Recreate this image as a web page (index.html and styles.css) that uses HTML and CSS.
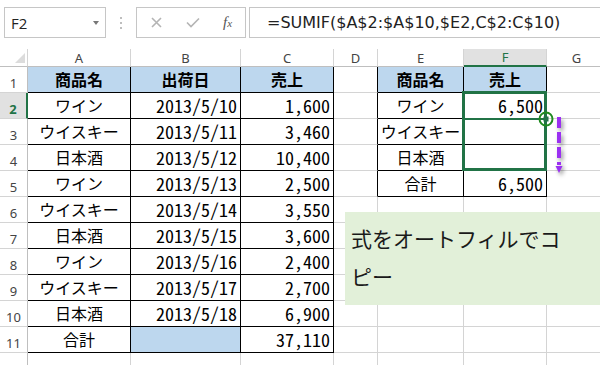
FILE: index.html
```html
<!DOCTYPE html>
<html lang="ja">
<head>
    <meta charset="UTF-8">
    <meta name="viewport" content="width=device-width, initial-scale=1.0">
    <title>SUMIF オートフィル</title>
    <link rel="stylesheet" href="styles.css">
</head>
<body>
    <div class="formula-bar">
        <div class="name-box"><span>F2</span><span class="drop"></span></div>
        <div class="grip">
            <svg width="4" height="14" viewBox="0 0 4 14"><circle cx="2" cy="2" r="1" /><circle cx="2" cy="7" r="1" /><circle cx="2" cy="12" r="1" /></svg>
        </div>
        <div class="func-box">
            <svg class="cancel" width="11" height="11" viewBox="0 0 11 11"><path d="M1 1L10 10M10 1L1 10" /></svg>
            <svg class="enter" width="14" height="11" viewBox="0 0 14 11"><path d="M1 5.5L5 9.5L13 1.5" /></svg>
            <span class="fx">f<i>x</i></span>
        </div>
        <div class="formula">=SUMIF($A$2:$A$10,$E2,C$2:C$10)</div>
    </div>

    <div class="sheet">
        <table class="grid">
            <colgroup>
                <col class="w-rh"><col class="w-a"><col class="w-b"><col class="w-c"><col class="w-d"><col class="w-e"><col class="w-f"><col class="w-g">
            </colgroup>
            <thead>
                <tr class="col-heads">
                    <th class="corner"><div class="corner-box"><span class="tri"></span></div></th>
                    <th>A</th><th>B</th><th>C</th><th>D</th><th>E</th><th class="on">F</th><th>G</th>
                </tr>
            </thead>
            <tbody>
                <tr>
                    <th class="rh">1</th>
                    <td class="t h c">商品名</td><td class="t h c">出荷日</td><td class="t h c">売上</td>
                    <td class="edge"></td>
                    <td class="t h c">商品名</td><td class="t h c">売上</td><td></td>
                </tr>
                <tr>
                    <th class="rh on">2</th>
                    <td class="t c">ワイン</td><td class="t n">2013/5/10</td><td class="t n">1,600</td>
                    <td class="edge"></td>
                    <td class="t c">ワイン</td><td class="t n">6,500</td><td></td>
                </tr>
                <tr>
                    <th class="rh">3</th>
                    <td class="t c">ウイスキー</td><td class="t n">2013/5/11</td><td class="t n">3,460</td>
                    <td class="edge"></td>
                    <td class="t c">ウイスキー</td><td class="t n"></td><td></td>
                </tr>
                <tr>
                    <th class="rh">4</th>
                    <td class="t c">日本酒</td><td class="t n">2013/5/12</td><td class="t n">10,400</td>
                    <td class="edge"></td>
                    <td class="t c">日本酒</td><td class="t n"></td><td></td>
                </tr>
                <tr>
                    <th class="rh">5</th>
                    <td class="t c">ワイン</td><td class="t n">2013/5/13</td><td class="t n">2,500</td>
                    <td class="edge"></td>
                    <td class="t c">合計</td><td class="t n">6,500</td><td></td>
                </tr>
                <tr>
                    <th class="rh">6</th>
                    <td class="t c">ウイスキー</td><td class="t n">2013/5/14</td><td class="t n">3,550</td>
                    <td></td><td></td><td></td><td></td>
                </tr>
                <tr>
                    <th class="rh">7</th>
                    <td class="t c">日本酒</td><td class="t n">2013/5/15</td><td class="t n">3,600</td>
                    <td></td><td></td><td></td><td></td>
                </tr>
                <tr>
                    <th class="rh">8</th>
                    <td class="t c">ワイン</td><td class="t n">2013/5/16</td><td class="t n">2,400</td>
                    <td></td><td></td><td></td><td></td>
                </tr>
                <tr>
                    <th class="rh">9</th>
                    <td class="t c">ウイスキー</td><td class="t n">2013/5/17</td><td class="t n">2,700</td>
                    <td></td><td></td><td></td><td></td>
                </tr>
                <tr>
                    <th class="rh">10</th>
                    <td class="t c">日本酒</td><td class="t n">2013/5/18</td><td class="t n">6,900</td>
                    <td></td><td></td><td></td><td></td>
                </tr>
                <tr>
                    <th class="rh">11</th>
                    <td class="t c">合計</td><td class="t fill"></td><td class="t n">37,110</td>
                    <td></td><td></td><td></td><td></td>
                </tr>
                <tr>
                    <th class="rh"></th>
                    <td></td><td></td><td></td><td></td><td></td><td></td><td></td>
                </tr>
            </tbody>
        </table>

        <!-- selection F2:F4 and the autofill drag -->
        <div class="sel"><div class="sel-top"></div></div>
        <svg class="handle" width="18" height="18" viewBox="0 0 18 18">
            <rect x="6.5" y="6.5" width="5" height="5" fill="#217346" />
            <circle cx="9" cy="9" r="6.5" fill="none" stroke="#1f8a1f" stroke-width="2" />
        </svg>
        <svg class="drag" width="14" height="66" viewBox="0 0 14 66">
            <path d="M5 2V50" stroke="#9b30f2" stroke-width="4" stroke-dasharray="11 4" fill="none" />
            <path d="M1.5 51H8.5L5 58Z" fill="#9b30f2" />
        </svg>

        <div class="note">式をオートフィルでコピー</div>
    </div>
</body>
</html>
```

FILE: styles.css
```css
html, body {
    margin: 0;
    overflow: hidden;
}
body {
    width: 600px;
    height: 365px;
    background: #fff;
    font-family: "Noto Sans CJK JP", sans-serif;
    color: #000;
}

/* formula bar */
.formula-bar {
    display: flex;
    align-items: flex-start;
    height: 49px;
    padding: 7px 0 0 4px;
    box-sizing: border-box;
}
.name-box {
    display: flex;
    align-items: center;
    width: 102px;
    height: 31px;
    padding: 0 6px 0 6px;
    box-sizing: border-box;
    border: 1px solid #c6c6c6;
    font: 15px "Open Sans", sans-serif;
    color: #222;
}
.drop {
    margin-left: auto;
    border-left: 3px solid transparent;
    border-right: 3px solid transparent;
    border-top: 4px solid #777;
}
.grip {
    display: flex;
    justify-content: center;
    align-items: center;
    width: 30px;
    height: 31px;
}
.grip svg {
    fill: #a8a8a8;
}
.func-box {
    display: flex;
    align-items: center;
    width: 110px;
    height: 31px;
    padding-left: 14px;
    box-sizing: border-box;
    border: 1px solid #c6c6c6;
}
.func-box path {
    fill: none;
    stroke: #b4b4b4;
    stroke-width: 1.6;
}
.enter {
    margin-left: 24px;
}
.fx {
    margin-left: 23px;
    font: italic 15px "Liberation Serif", serif;
    color: #555;
}
.fx i {
    font-size: 11px;
}
.formula {
    flex: 1;
    height: 31px;
    margin-left: 3px;
    padding-left: 17px;
    box-sizing: border-box;
    border: 1px solid #c6c6c6;
    border-right: none;
    font: 16px/29px "DejaVu Sans", sans-serif;
    color: #222;
    white-space: nowrap;
}

/* sheet */
.sheet {
    position: relative;
}
.grid {
    border-collapse: separate;
    border-spacing: 0;
    table-layout: fixed;
    width: 607px;
}
.w-rh { width: 28px; }
.w-a { width: 103px; }
.w-b { width: 110px; }
.w-c { width: 93px; }
.w-d { width: 44px; }
.w-e { width: 86px; }
.w-f { width: 83px; }
.w-g { width: 60px; }

.grid th, .grid td {
    box-sizing: border-box;
    padding: 0;
    border-right: 1px solid #d4d4d4;
    border-bottom: 1px solid #d4d4d4;
    white-space: nowrap;
    overflow: hidden;
}
.grid td {
    height: 26px;
    font-size: 16px;
    line-height: 1;
    vertical-align: middle;
    padding-bottom: 2px;
}
.col-heads th {
    height: 18px;
    font: 13px "Noto Sans", sans-serif;
    color: #444;
    font-weight: normal;
    border-bottom-color: #bfbfbf;
    line-height: 16px;
}
.col-heads th.on {
    background: #e1e1e1;
    color: #217346;
    border-bottom: 2px solid #217346;
}
.corner-box {
    display: flex;
    justify-content: flex-end;
    align-items: flex-end;
    height: 17px;
    padding: 0 2px 3px 0;
    box-sizing: border-box;
}
.tri {
    border-left: 10px solid transparent;
    border-bottom: 10px solid #dcdcdc;
}
.rh {
    height: 26px;
    font: 13px "Noto Sans", sans-serif;
    color: #444;
    font-weight: normal;
    vertical-align: bottom;
    line-height: 16px;
    padding-bottom: 1px !important;
    border-right-color: #bfbfbf !important;
}
.rh.on {
    background: #e1e1e1;
    color: #217346;
    font-weight: bold;
    border-right: 2px solid #217346 !important;
}

.t {
    border-right-color: #000 !important;
    border-bottom-color: #000 !important;
}
.edge {
    border-right-color: #000 !important;
}
.h {
    background: #bdd7ee;
    font-weight: bold;
}
.fill {
    background: #bdd7ee;
}
.c {
    text-align: center;
}
.n {
    text-align: right;
    padding-right: 3px !important;
    font-family: "Noto Sans Mono CJK JP", "Noto Sans CJK JP", sans-serif;
    font-size: 18px !important;
    font-feature-settings: "hwid" 1;
}

/* overlays */
.sel {
    position: absolute;
    left: 462px;
    top: 42px;
    width: 85px;
    height: 80px;
    border: 3px solid #217346;
    box-sizing: border-box;
}
.sel-top {
    height: 24px;
    border-bottom: 2px solid #217346;
}
.handle {
    position: absolute;
    left: 537px;
    top: 61px;
}
.drag {
    position: absolute;
    left: 554px;
    top: 66px;
    filter: drop-shadow(2px 3px 2px rgba(0, 0, 0, 0.4));
}
.note {
    position: absolute;
    left: 345px;
    top: 163px;
    width: 255px;
    height: 93px;
    padding: 7px 29px 0 6px;
    box-sizing: border-box;
    background: #e2f0d9;
    font-size: 21px;
    line-height: 38px;
    color: #1a1a1a;
}
```
